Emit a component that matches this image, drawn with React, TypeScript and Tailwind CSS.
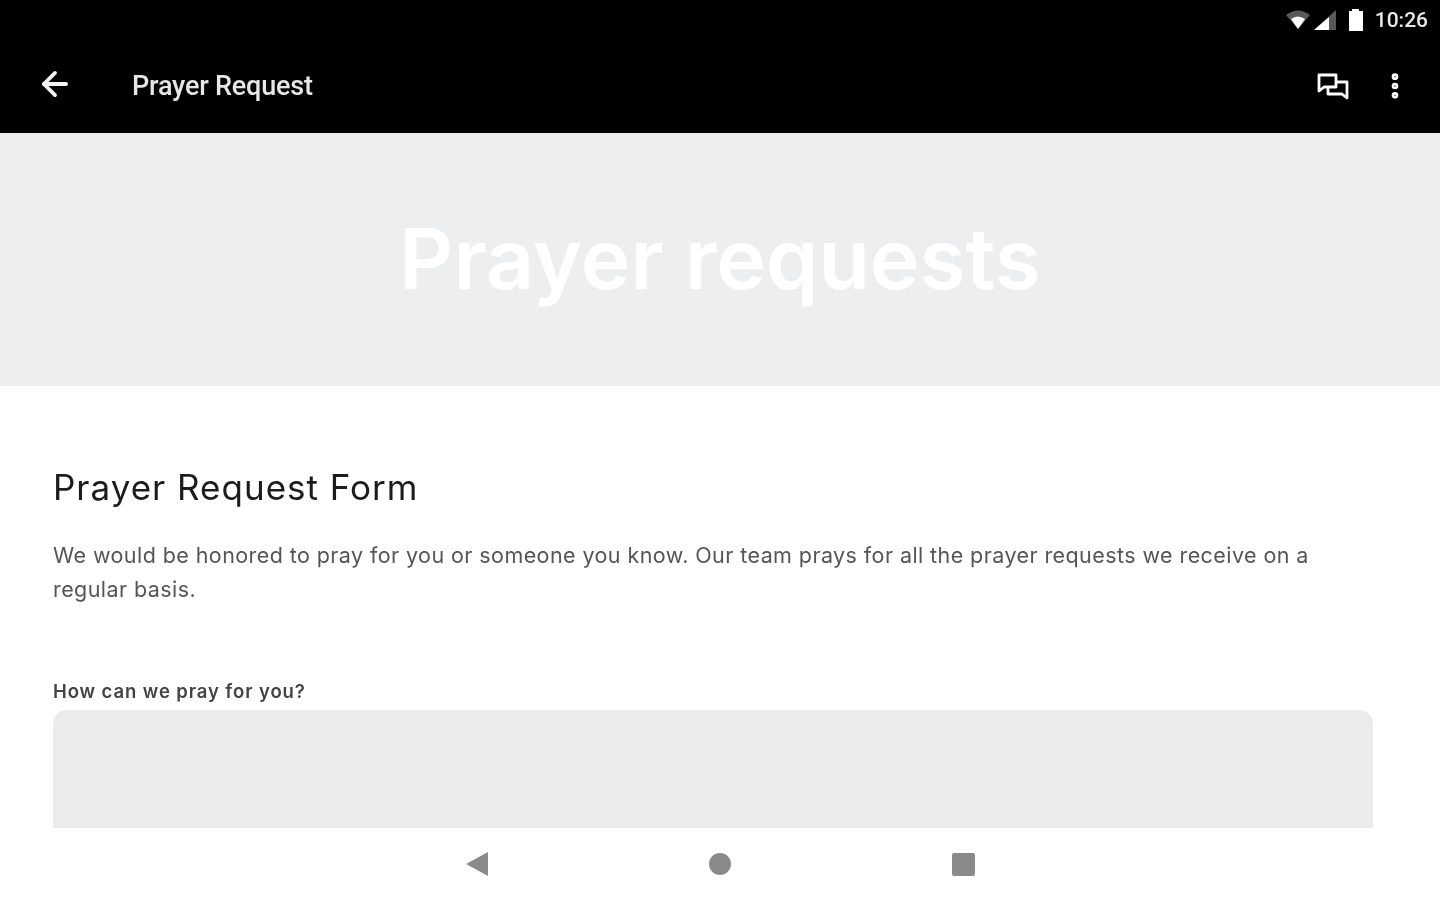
import { ArrowLeft, EllipsisVertical } from 'lucide-react';

function StatusIcons() {
  return (
    <div className="flex items-center justify-end h-[40px] pr-[12px] gap-[11px]">
      <svg width="50" height="24" viewBox="0 0 50 24" className="mr-[1px]">
        <path d="M0 7 Q12 -2 24 7 L12 21 Z" fill="#fff" fillOpacity="0.35" />
        <path d="M5 11 Q12 6 19 11 L12 21 Z" fill="#fff" />
        <path d="M28 22 L50 2 V22 Z" fill="#fff" fillOpacity="0.35" />
        <path d="M28 22 L43 9 V22 Z" fill="#fff" />
      </svg>
      <svg width="16" height="24" viewBox="0 0 16 24">
        <path d="M4 1 H11 V3 H15 V23 H1 V3 H4 Z" fill="#fff" />
      </svg>
      <span className="font-['Roboto',sans-serif] text-[21px] font-medium leading-none text-[#e8e8e8]">10:26</span>
    </div>
  );
}

function ChatIcon() {
  return (
    <svg width="34" height="30" viewBox="0 0 34 30" fill="none" stroke="#fff" strokeWidth="2.8" strokeLinejoin="round">
      <path d="M4 4 H21 V16 H9 L4 20 Z" />
      <path d="M21 11 H32 V27 L27 23 H13 V16" />
    </svg>
  );
}

export default function App() {
  return (
    <div className="w-[1440px] h-[900px] overflow-hidden bg-white flex flex-col font-['Inter',sans-serif] blur-[0.6px]">
      <header className="bg-black h-[133px] shrink-0">
        <StatusIcons />
        <div className="flex items-center h-[93px] pb-[2px] pl-[36px] pr-[29px]">
          <ArrowLeft size={38} color="#f2f2f2" strokeWidth={2.4} className="-mt-[3px]" />
          <h1 className="ml-[58px] mt-[2px] font-['Roboto',sans-serif] text-[27px] font-medium text-[#e6e6e6] tracking-[-0.2px]">
            Prayer Request
          </h1>
          <div className="ml-auto flex items-center gap-[30px]">
            <ChatIcon />
            <EllipsisVertical size={32} color="#fff" strokeWidth={3} />
          </div>
        </div>
      </header>

      <section className="h-[253px] shrink-0 bg-[#edeef0] flex items-center justify-center">
        <h2 className="text-[84px] font-semibold text-white leading-none pb-[2px]">Prayer requests</h2>
      </section>

      <main className="flex-1 min-h-0 pl-[53px] pr-[67px] pt-[77px]">
        <h3 className="text-[35px] font-normal leading-[48px] text-[#1c1c1c] tracking-[1px]">Prayer Request Form</h3>
        <p className="mt-[27px] text-[21.5px] leading-[34px] text-[#555] tracking-[0.42px]">
          We would be honored to pray for you or someone you know. Our team prays for all the prayer requests we receive on a regular basis.
        </p>
        <label className="block mt-[71px] text-[18.5px] font-semibold leading-[28px] text-[#444] tracking-[0.9px]">How can we pray for you?</label>
        <div className="mt-[5px] h-[118px] w-[1320px] rounded-t-[14px] bg-[#ebebeb]" />
      </main>

      <nav className="h-[72px] shrink-0 flex items-center justify-center gap-[221px]">
        <svg width="22" height="26" viewBox="0 0 22 26"><path d="M0 13 L22 1 V25 Z" fill="#8a8a8a" /></svg>
        <div className="w-[22px] h-[22px] rounded-full bg-[#8a8a8a]" />
        <div className="w-[23px] h-[23px] rounded-[2px] bg-[#8a8a8a]" />
      </nav>
    </div>
  );
}
